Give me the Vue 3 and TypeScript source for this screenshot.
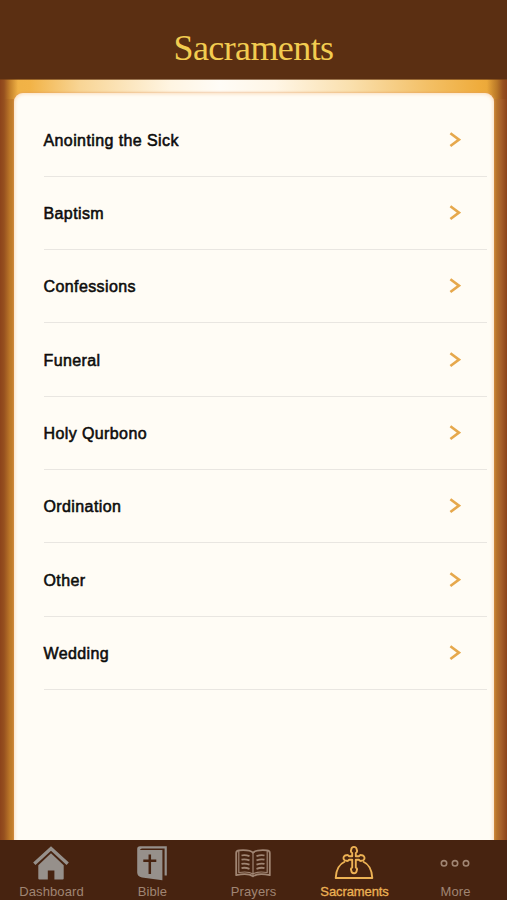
<script setup lang="ts">
const sacraments: string[] = [
  'Anointing the Sick',
  'Baptism',
  'Confessions',
  'Funeral',
  'Holy Qurbono',
  'Ordination',
  'Other',
  'Wedding',
]

interface Tab {
  id: string
  label: string
}

const tabs: Tab[] = [
  { id: 'dashboard', label: 'Dashboard' },
  { id: 'bible', label: 'Bible' },
  { id: 'prayers', label: 'Prayers' },
  { id: 'sacraments', label: 'Sacraments' },
  { id: 'more', label: 'More' },
]

const activeTab = 'sacraments'
</script>

<template>
  <div class="screen">
    <header class="header">
      <h1 class="title">Sacraments</h1>
    </header>

    <main class="frame">
      <div class="panel">
        <ul class="list">
          <li v-for="name in sacraments" :key="name" class="row">
            <span class="name">{{ name }}</span>
            <svg class="chevron" width="12" height="16" viewBox="0 0 12 16">
              <path d="M1.400 1.200 10 7.600 1.400 14" fill="none" stroke="#e6a84c" stroke-width="2.600" />
            </svg>
          </li>
        </ul>
      </div>
    </main>

    <nav class="tabs">
      <a v-for="tab in tabs" :key="tab.id" class="tab" :class="{ active: tab.id === activeTab }">
        <svg v-if="tab.id === 'dashboard'" class="icon" width="40" height="38" viewBox="0 0 40 38">
          <path d="M3.300 18.700 20 3.500 36.700 18.700" fill="none" stroke="#96908b" stroke-width="3.400" />
          <path d="M20 8.300 7.300 20.200V33.500a1 1 0 0 0 1 1H16.800V25.400H23.400V34.500H31.700a1 1 0 0 0 1-1V20.200Z" fill="#96908b" />
        </svg>
        <svg v-else-if="tab.id === 'bible'" class="icon" width="40" height="38" viewBox="0 0 40 38">
          <path d="M8 1.200H34.800V30.500H32.600V3.400H10Q8.200 3.500 8 5H30.400V35.300L10 32.400Q5.200 31.500 5.200 27.500V4Q5.200 1.200 8 1.200Z" fill="#96908b" />
          <path d="M17.800 9.500V29M11.300 15.700H24.300" fill="none" stroke="#472310" stroke-width="2.500" />
        </svg>
        <svg v-else-if="tab.id === 'prayers'" class="icon" width="40" height="38" viewBox="0 0 40 38">
          <g fill="none" stroke="#a08573" stroke-width="1.800" stroke-linejoin="round">
            <path d="M20 7.800C18 5.300 12 4.900 6.200 5.300Q3.200 5.500 3.200 8V30.200C9 29 16.800 29 20 31.400C23.200 29 31 29 36.800 30.200V8Q36.800 5.500 33.800 5.300C28 4.900 22 5.300 20 7.800Z" />
            <path d="M20 7.800V31M5.800 5.500V27.500C12 26.500 17 27 20 29C23 27 28 26.500 34.200 27.500V5.500" stroke-width="1.200" />
            <path d="M8.500 10.500Q12 9.500 16.500 11.200M8.500 14.700Q12 13.700 16.500 15.400M8.500 18.900Q12 17.900 16.500 19.600M8.500 23.100Q12 22.100 16.500 23.800M23.500 11.200Q28 9.500 31.500 10.500M23.500 15.400Q28 13.700 31.500 14.700M23.500 19.600Q28 17.900 31.500 18.900M23.500 23.800Q28 22.100 31.500 23.100" />
          </g>
        </svg>
        <svg v-else-if="tab.id === 'sacraments'" class="icon" width="40" height="38" viewBox="0 0 40 38">
          <g fill="none" stroke="#edb254" stroke-width="1.900" stroke-linejoin="round">
            <path d="M11 16.500C5.500 19 2 25 1.700 33H38.300C38 25 34.500 19 29 16.500" />
            <path d="M18.200 11.200V8A2.300 2.300 0 0 1 17.300 4.600A2.700 2.700 0 1 1 22.700 4.600A2.300 2.300 0 0 1 21.800 8V11.200H25A2.300 2.300 0 0 1 27.800 10.300A2.700 2.700 0 1 1 27.800 15.700A2.300 2.300 0 0 1 25 14.800H21.800V22.500A2.300 2.300 0 0 1 22.700 25.600A2.700 2.700 0 1 1 17.300 25.600A2.300 2.300 0 0 1 18.200 22.500V14.800H15A2.300 2.300 0 0 1 12.200 15.700A2.700 2.700 0 1 1 12.200 10.300A2.300 2.300 0 0 1 15 11.200Z" />
          </g>
        </svg>
        <svg v-else class="icon" width="40" height="38" viewBox="0 0 40 38">
          <g fill="none" stroke="#a08573" stroke-width="1.600">
            <circle cx="9" cy="18.300" r="2.700" />
            <circle cx="20" cy="18.300" r="2.700" />
            <circle cx="31" cy="18.300" r="2.700" />
          </g>
        </svg>
        <span class="label">{{ tab.label }}</span>
      </a>
    </nav>
  </div>
</template>

<style>
body {
  margin: 0;
}
</style>

<style scoped>
.screen {
  display: flex;
  flex-direction: column;
  width: 507px;
  height: 900px;
  overflow: hidden;
  font-family: 'Liberation Sans', Arial, sans-serif;
}

.header {
  box-sizing: border-box;
  height: 79px;
  flex: none;
  padding-top: 28px;
  background: #5b2f12;
}

.title {
  margin: 0;
  text-align: center;
  font: 400 36px/40px 'Liberation Serif', 'Times New Roman', serif;
  letter-spacing: -0.6px;
  color: #f2cc50;
}

.frame {
  box-sizing: border-box;
  flex: 1;
  min-height: 0;
  padding: 14px 13px 0 14px;
  overflow: hidden;
  background:
    linear-gradient(to bottom, #6b3a14 0, transparent 1.500px) top / 100% 13px no-repeat,
    linear-gradient(to right, #8c431a 0, #96501f 4px, rgba(192, 124, 40, 0.9) 10px, rgba(226, 155, 48, 0) 18px) left top / 18px 20px no-repeat,
    linear-gradient(to left, #8c431a 0, #96501f 4px, rgba(180, 115, 38, 0.9) 10px, rgba(226, 155, 48, 0) 20px) right top / 20px 20px no-repeat,
    linear-gradient(to right, #eeb044 0, #f2b347 30px, #f8d595 80px, #fff5e2 170px, #fffcf7 220px, #fff6e6 275px, #fae0ae 350px, #f3bf64 430px, #efac3c 480px, #e2a034 100%) top / 100% 20px no-repeat,
    linear-gradient(to right, #8c431a 0, #96501f 4px, #bd7828 10px, #c4812d 15px, #c4812d 490px, #bd7a2b 495px, #a7602a 501px, #8c431a 507px);
}

.panel {
  box-sizing: border-box;
  height: 760px;
  padding: 10.500px 7px 0 29.500px;
  border-radius: 9px 9px 0 0;
  background: #fffcf5;
  box-shadow:
    0 0 3px 0 #e39a58,
    inset 0 0 4px 0 #f7cfa5;
}

.list {
  margin: 0;
  padding: 0;
  list-style: none;
}

.row {
  box-sizing: border-box;
  display: flex;
  align-items: center;
  justify-content: space-between;
  height: 73.340px;
  padding-right: 26.500px;
  border-bottom: 1px solid #e9e6e1;
}

.name {
  padding-top: 2px;
  font-size: 16px;
  line-height: 20px;
  letter-spacing: 0.400px;
  color: #0d0c0b;
  -webkit-text-stroke: 0.550px #0d0c0b;
}

.chevron {
  flex: none;
}

.tabs {
  display: grid;
  grid-template-columns: repeat(5, 101px);
  flex: none;
  box-sizing: border-box;
  height: 60px;
  padding: 5px 0 0 0.500px;
  background: #472310;
}

.tab {
  display: flex;
  flex-direction: column;
  align-items: center;
  color: #a08573;
}

.icon {
  flex: none;
}

.label {
  margin-top: 1px;
  padding-left: 1px;
  font-size: 13px;
  line-height: 15px;
  letter-spacing: 0.100px;
}

.active {
  color: #edb254;
}

.active .label {
  letter-spacing: -0.100px;
  -webkit-text-stroke: 0.300px #edb254;
}
</style>
